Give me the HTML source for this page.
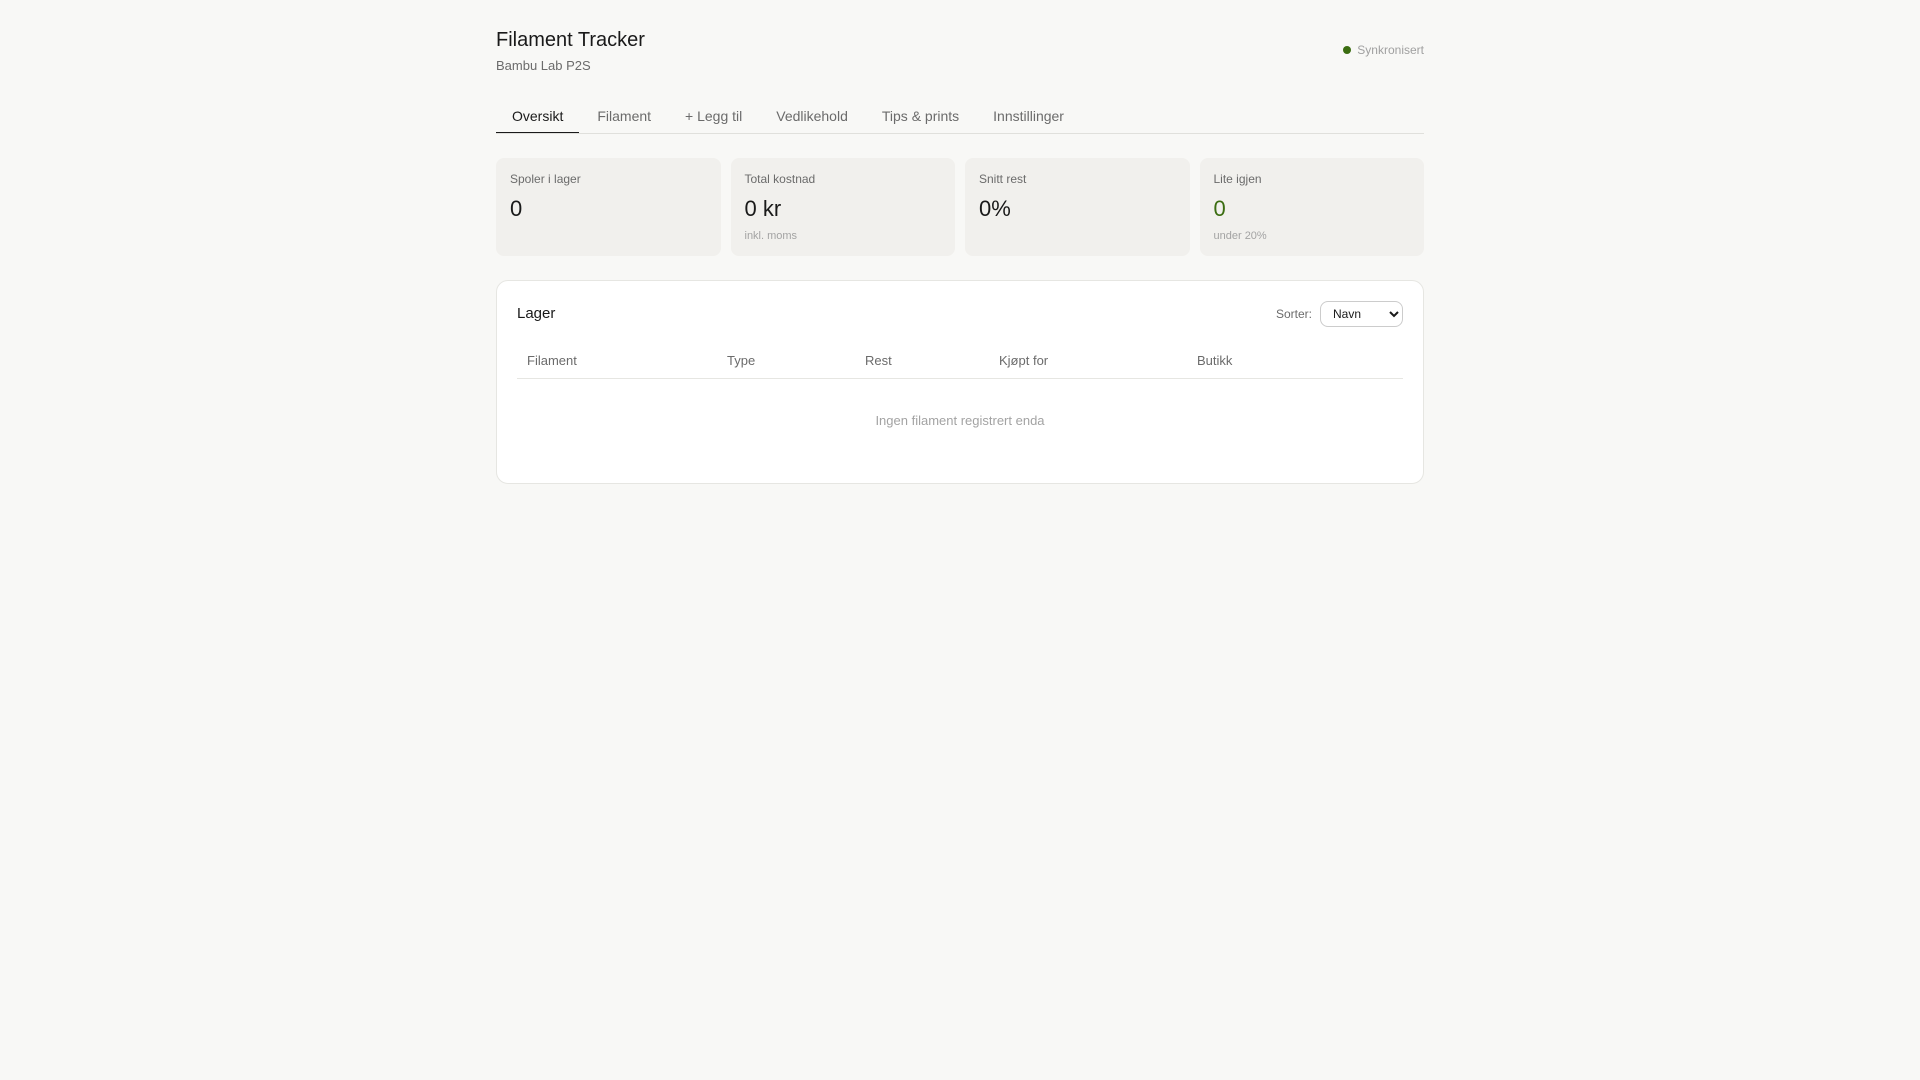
<!DOCTYPE html>
<html lang="no">
<head>
<meta charset="utf-8">
<title>Filament Tracker</title>
<style>
*{box-sizing:border-box;margin:0;padding:0}
html,body{width:1920px;height:1080px;overflow:hidden}
body{background:#f8f8f6;color:#1a1a1a;font-family:"Liberation Sans",Arial,sans-serif;position:relative}
.wrap{position:absolute;left:496px;top:0;width:928px;height:500px;will-change:transform}
.abs{position:absolute;white-space:nowrap}
h1{font-weight:400;font-size:20px;line-height:24px;left:0;top:28px;color:#1a1a1a}
.sub{font-size:13px;line-height:16px;left:0;top:58px;color:#6b6b6b}
.sync{font-size:12px;line-height:14px;right:0;top:43px;color:#a0a0a0}
.dot{position:absolute;left:847px;top:46px;width:8px;height:8px;border-radius:50%;background:#3b6d11}
.tabs{position:absolute;left:0;top:100px;width:928px;height:34px;border-bottom:1px solid #e0e0dc;display:flex;gap:2px}
.tab{font-size:14px;line-height:16px;padding:8px 16px;height:33px;color:#6b6b6b;border-bottom:1px solid transparent;white-space:nowrap}
.tab.on{color:#1a1a1a;border-bottom:1px solid #1a1a1a}
.stats{position:absolute;left:0;top:158px;width:928px;display:grid;grid-template-columns:repeat(4,1fr);gap:10px}
.stat{background:#f1f0ed;border-radius:8px;height:98px;padding:14px;position:relative}
.lab{font-size:12px;line-height:14px;color:#6b6b6b;position:absolute;left:14px;top:14px;white-space:nowrap}
.val{font-size:22px;line-height:26px;color:#1a1a1a;position:absolute;left:14px;top:38px;white-space:nowrap}
.note{font-size:11px;line-height:13px;color:#a3a3a3;position:absolute;left:14px;top:72px;white-space:nowrap}
.panel{position:absolute;left:0;top:280px;width:928px;height:204px;background:#fff;border:1px solid #e6e6e2;border-radius:12px}
.ptitle{font-size:15px;line-height:18px;left:20px;top:24px;color:#1a1a1a}
.slab{font-size:12px;line-height:14px;left:779px;top:26px;color:#6b6b6b}
select{position:absolute;left:823px;top:20px;width:83px;height:26px;font-family:"Liberation Sans",Arial,sans-serif;font-size:12px;color:#1a1a1a;background:#fff;border:1px solid #ccc;border-radius:8px;padding:0 8px}
.th{font-size:13px;line-height:16px;top:72px;color:#6b6b6b}
.rule{position:absolute;left:20px;top:97px;width:886px;height:1px;background:#e6e6e2}
.empty{position:absolute;left:20px;top:132px;width:886px;text-align:center;font-size:13px;line-height:16px;color:#a3a3a3}
</style>
</head>
<body>
<div class="wrap">
  <h1 class="abs">Filament Tracker</h1>
  <div class="abs sub">Bambu Lab P2S</div>
  <div class="dot"></div>
  <div class="abs sync">Synkronisert</div>
  <div class="tabs">
    <div class="tab on">Oversikt</div>
    <div class="tab">Filament</div>
    <div class="tab">+ Legg til</div>
    <div class="tab">Vedlikehold</div>
    <div class="tab">Tips &amp; prints</div>
    <div class="tab">Innstillinger</div>
  </div>
  <div class="stats">
    <div class="stat"><div class="lab">Spoler i lager</div><div class="val">0</div></div>
    <div class="stat"><div class="lab">Total kostnad</div><div class="val">0 kr</div><div class="note">inkl. moms</div></div>
    <div class="stat"><div class="lab">Snitt rest</div><div class="val">0%</div></div>
    <div class="stat"><div class="lab">Lite igjen</div><div class="val" style="color:#3b6d11">0</div><div class="note">under 20%</div></div>
  </div>
  <div class="panel">
    <div class="abs ptitle">Lager</div>
    <div class="abs slab">Sorter:</div>
    <select><option>Navn</option></select>
    <div class="abs th" style="left:30px">Filament</div>
    <div class="abs th" style="left:230px">Type</div>
    <div class="abs th" style="left:368px">Rest</div>
    <div class="abs th" style="left:502px">Kjøpt for</div>
    <div class="abs th" style="left:700px">Butikk</div>
    <div class="rule"></div>
    <div class="empty">Ingen filament registrert enda</div>
  </div>
</div>
</body>
</html>
